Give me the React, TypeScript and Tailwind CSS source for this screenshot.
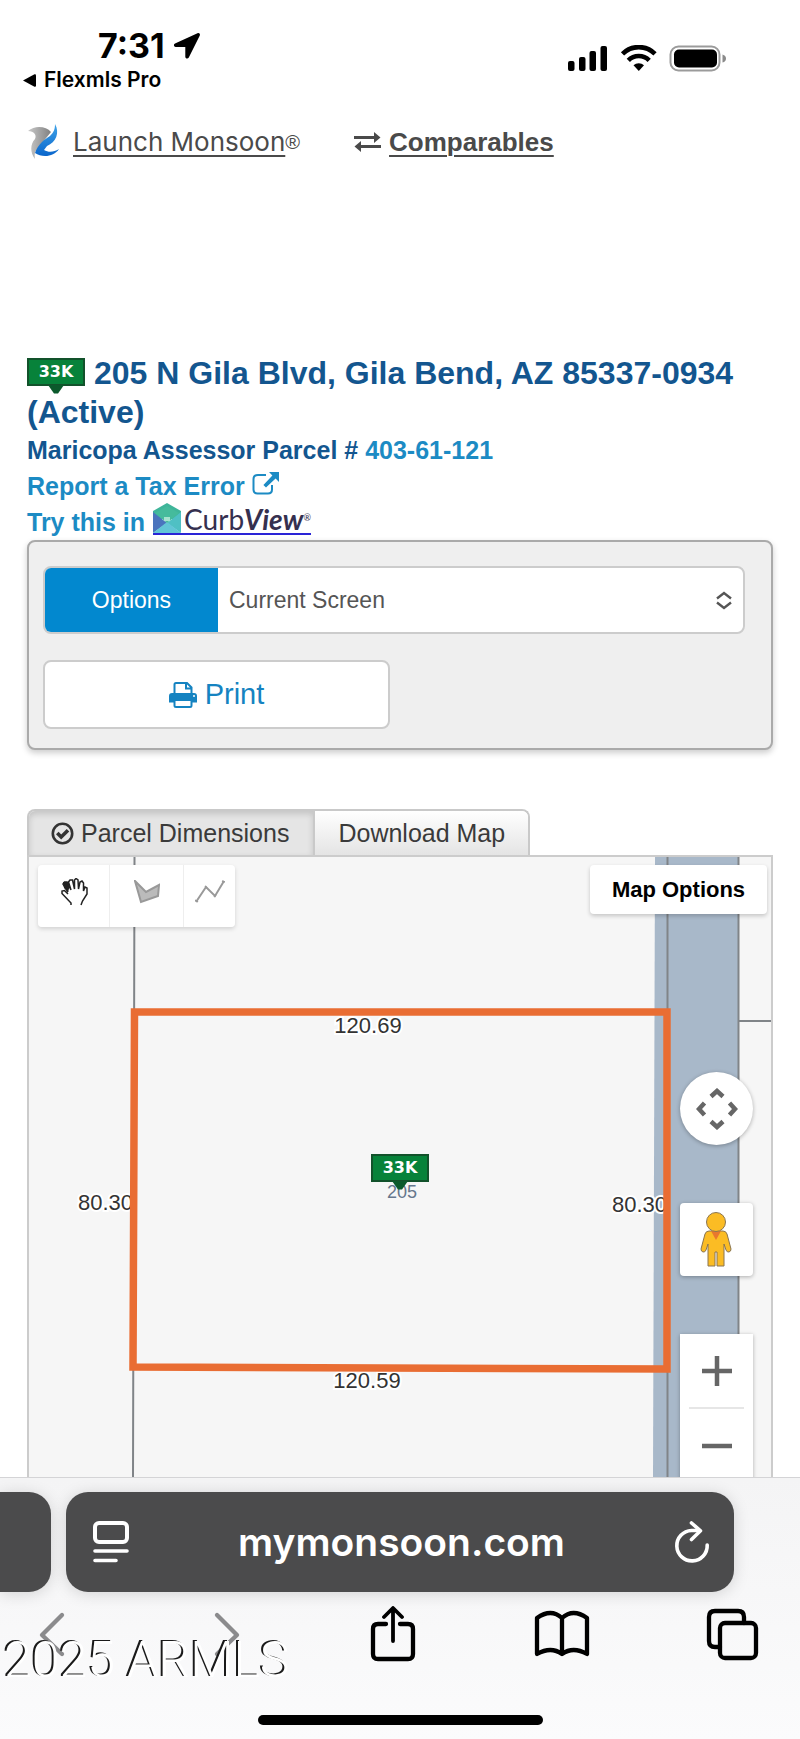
import clsx from "clsx";
import type { ReactNode } from "react";

const StatusBar = () => (
    <header className="flex items-start justify-between pt-[26px] pl-[23px] pr-[74px] text-black font-[Inter,sans-serif]">
        <div>
            <div className="flex items-center gap-2 pl-[75px] text-[34px] leading-10 font-bold">
                7:31
                <svg width="28" height="28" viewBox="0 0 28 28" aria-hidden="true">
                    <path d="M24.5 1.2 2 11.6C.3 12.4.8 15 2.7 15h9.6v9.8c0 2 2.700 2.400 3.500.700L26.800 3.600c.7-1.600-.7-3.100-2.300-2.400z" />
                </svg>
            </div>
            <a href="#flexmls" className="flex items-center gap-2 text-[21px] leading-7 font-semibold">
                <svg width="13" height="13" viewBox="0 0 13 13" aria-hidden="true">
                    <path d="M0 6.500 11.500.300Q13-.2 13 1.500v10q0 1.700-1.500 1.200z" />
                </svg>
                Flexmls Pro
            </a>
        </div>
        <svg className="mt-[19px]" width="159" height="28" viewBox="0 0 159 28" aria-label="Signal, Wi-Fi and battery">
            <rect x="1" y="16" width="6.500" height="10" rx="2" />
            <rect x="12" y="12" width="6.500" height="14" rx="2" />
            <rect x="22.500" y="6" width="6.500" height="20" rx="2" />
            <rect x="33.500" y="1" width="6.500" height="25" rx="2" />
            <g fill="none" stroke="#000" strokeWidth="4.600">
                <path d="M55.500 8.800a23 23 0 0 1 32.500 0" />
                <path d="M61.300 15.300a14.800 14.800 0 0 1 20.900 0" />
            </g>
            <path d="M66.500 20.300a7.800 7.800 0 0 1 10.500 0l-5.200 5.700z" />
            <rect x="103.500" y="1.500" width="49" height="24" rx="8" fill="none" stroke="#9b9b9b" strokeWidth="2" />
            <rect x="107" y="4.500" width="43" height="18" rx="5" />
            <path d="M155.500 9.500q3.500 1 3.500 4t-3.500 4z" fill="#8a8a8a" />
        </svg>
    </header>
);

const MonsoonLogo = () => (
    <svg width="33" height="36" viewBox="0 0 33 36" aria-hidden="true">
        <defs>
            <linearGradient id="blade" x1="0" y1="0" x2="1" y2="0">
                <stop offset="0" stopColor="#c9c9c9" />
                <stop offset="1" stopColor="#808080" />
            </linearGradient>
            <linearGradient id="swirl" x1="0" y1="0" x2="0" y2="1">
                <stop offset="0" stopColor="#3fa3e8" />
                <stop offset="1" stopColor="#0a66cc" />
            </linearGradient>
        </defs>
        <path d="M1 7C8 1 19 2 24 8L11 24C8 27 7 30 8 35 3 29 3 20 8 15 10 11 7 7 1 7z" fill="url(#blade)" />
        <path d="M28 0C33 9 29 18 20 22L17 26C22 29 27 28 32 25 27 33 15 34 8 29 11 20 18 15 23 12 27 8 28 5 28 0z" fill="url(#swirl)" />
    </svg>
);

const PriceTag = () => (
    <span className="relative inline-flex h-[28px] w-[58px] items-center justify-center border-2 border-[#12522b] bg-[#07823a] align-top font-['DejaVu_Sans',sans-serif] text-[16px] leading-6 font-bold text-white">
        33K
        <svg className="absolute top-[25px] left-[19px]" width="16" height="10" viewBox="0 0 16 10" aria-hidden="true">
            <path d="M0 0h16L10 8.500H6z" fill="#0b5a2c" />
        </svg>
    </span>
);

const CurbViewLogo = () => (
    <a href="#curbview" className="inline-flex h-[31px] items-end border-b-2 border-[#2a24d6] font-[Lato,sans-serif] text-[28px] leading-7 font-normal text-[#35304f]">
        <svg width="29" height="30" viewBox="0 0 29 30" aria-hidden="true">
            <path d="M0 8 14 0l14 8v8H0z" fill="#3fb59a" />
            <path d="M0 9v21l14-10z" fill="#4a74bd" />
            <path d="M28 9v21L14 20z" fill="#4fc0c4" />
            <path d="M0 30 14 19l14 11z" fill="#62c5d6" />
            <path d="M2 10 14 20 26 10 14 3z" fill="#45bb9c" />
            <path d="M11 14h6v4h-6z" fill="#a5e3cf" />
        </svg>
        <span className="pl-[2px]">Curb</span>
        <span className="font-bold italic">View</span>
        <span className="self-start text-[9px] leading-7">®</span>
    </a>
);

const PropertyHeading = () => (
    <section className="mt-[196px] font-bold text-[#13568f]">
        <h1 className="text-[32px] leading-[39px]">
            <span className="flex items-start gap-[9px]">
                <span className="flex pt-1">
                    <PriceTag />
                </span>
                <span>205 N Gila Blvd, Gila Bend, AZ 85337-0934</span>
            </span>
            <span className="block">(Active)</span>
        </h1>
        <div className="text-[25px] leading-9">
            <p>
                Maricopa Assessor Parcel #{" "}
                <a href="#parcel" className="text-[#1c8bc4]">403-61-121</a>
            </p>
            <p>
                <a href="#tax-error" className="text-[#1c8bc4]">
                    Report a Tax Error{" "}
                    <svg className="inline-block align-baseline" width="27" height="23" viewBox="0 0 27 23" aria-hidden="true">
                        <path d="M14 3H6Q1.500 3 1.500 7v10.500q0 4 4 4h10.500q4 0 4-4V13" fill="none" stroke="currentColor" strokeWidth="2" />
                        <path d="M17 0h10v10l-3.400-3.400-9.600 9-2.600-2.600 9-9.600z" fill="currentColor" />
                    </svg>
                </a>
            </p>
            <p className="flex items-start gap-2">
                <span className="text-[#1c8bc4]">Try this in</span>
                <CurbViewLogo />
            </p>
        </div>
    </section>
);

const OptionsPanel = () => (
    <section className="rounded-lg border-2 border-[#aaa] bg-[#efefef] pt-6 pr-[26px] pb-[19px] pl-[14px] shadow-[0_3px_6px_rgba(0,0,0,0.2)]">
        <div className="flex h-[68px] rounded-lg border-2 border-[#ccc] bg-white text-[23px]">
            <label htmlFor="print-options" className="flex w-[173px] items-center justify-center rounded-l-md bg-[#0288cf] text-white">
                Options
            </label>
            <div className="relative flex-1">
                <select id="print-options" className="h-full w-full appearance-none rounded-r-lg bg-white pl-[11px] text-[#555]">
                    <option>Current Screen</option>
                </select>
                <svg className="pointer-events-none absolute top-[23px] right-[11px]" width="16" height="19" viewBox="0 0 16 19" fill="none" stroke="#555" strokeWidth="2.400" aria-hidden="true">
                    <path d="M1 7.500 8 2l7 5.500M1 11.500 8 17l7-5.500" />
                </svg>
            </div>
        </div>
        <button type="button" className="mt-[26px] flex h-[69px] w-[347px] items-center justify-center gap-2 rounded-lg border-2 border-[#ccc] bg-white text-[29px] text-[#1583c1]">
            <svg width="28" height="26" viewBox="0 0 28 26" aria-hidden="true">
                <path d="M0 14q0-3 3-3h22q3 0 3 3v6.500h-5V17H5v3.500H0z" fill="currentColor" />
                <path d="M5.500 12V2.500q0-1.500 1.500-1.500h11l4.500 4.500V12M17 1v5.500h5.500" fill="none" stroke="currentColor" strokeWidth="2" />
                <path d="M5.500 18h17v5.500q0 1.500-1.500 1.500H7q-1.500 0-1.500-1.500z" fill="#fff" stroke="currentColor" strokeWidth="2" />
                <circle cx="25" cy="14" r="1" fill="#fff" />
            </svg>
            Print
        </button>
    </section>
);

const MapTabs = () => (
    <div role="tablist" className="mt-[59px] flex w-fit rounded-t-lg border-2 border-b-0 border-[#c9c9c9] text-[25px] leading-[44px] text-[#3a3a3a]">
        <button type="button" role="tab" aria-selected="true" className="flex items-center gap-[7px] rounded-tl-md bg-[#e5e5e5] pr-6 pl-[22px] shadow-[inset_0_3px_6px_rgba(0,0,0,0.15)]">
            <svg width="23" height="23" viewBox="0 0 23 23" fill="none" stroke="#333" aria-hidden="true">
                <circle cx="11.500" cy="11.500" r="9.700" strokeWidth="2.600" />
                <path d="m6.300 11 3.900 4 6.800-6.800" strokeWidth="3.600" />
            </svg>
            Parcel Dimensions
        </button>
        <button type="button" role="tab" aria-selected="false" className="rounded-tr-md border-l-2 border-[#c9c9c9] bg-linear-to-b from-white to-[#e4e4e4] px-[23px]">
            Download Map
        </button>
    </div>
);

const ParcelDrawing = () => (
    <svg
        className="block h-full w-full font-['Liberation_Sans',sans-serif]"
        viewBox="0 0 742 620"
        preserveAspectRatio="xMidYMid slice"
        aria-label="Parcel map"
    >
        <path d="M626 0h84v620h-86z" fill="#a8b8c9" />
        <g stroke="#808488" strokeWidth="2">
            <path d="M638.500 0v620M709.500 0v620" />
            <path d="M105.500 0 104 620M709 164h33" />
        </g>
        <g fontSize="22" fill="#333" stroke="#fff" strokeWidth="4" paintOrder="stroke">
            <text x="339" y="176" textAnchor="middle">120.69</text>
            <text x="338" y="531" textAnchor="middle">120.59</text>
            <text x="49" y="353">80.30</text>
            <text x="583" y="355">80.30</text>
        </g>
        <text x="373" y="341" textAnchor="middle" fontSize="18" fill="#66778d">205</text>
        <path d="M105.500 155H638v357l-534-2z" fill="none" stroke="#e96d33" strokeWidth="7.500" />
    </svg>
);

type MapButtonProps = {
    label: string;
    className?: string;
    children: ReactNode;
};

const MapButton = ({ label, className, children }: MapButtonProps) => (
    <button type="button" aria-label={label} className={clsx("flex items-center justify-center bg-white", className)}>
        {children}
    </button>
);

const ParcelMap = () => (
    <section className="relative h-[622px] overflow-hidden border-2 border-b-0 border-[#ccc] bg-[#f6f6f6]">
        <ParcelDrawing />

        <div className="absolute top-[297px] left-1/2 -ml-[29px] flex">
            <PriceTag />
        </div>

        <div className="absolute top-2 left-[9px] flex h-[62px] gap-px rounded-sm bg-[#eee] shadow-[0_2px_4px_rgba(0,0,0,0.15)]">
            <MapButton label="Pan" className="w-[71px] rounded-l-sm pb-2">
                <svg width="28" height="28" viewBox="0 0 28 28" fill="none" stroke="#222" strokeWidth="1.500" aria-hidden="true">
                    <path d="M11 27v-2L2 15.500v-2.500l2.500-.5L8 16M8 14 3 6l1.500-2H7l4 8L8.500 4 10 2h2.500l2 9V2l1.500-1.500L18 2l.5 9L20 4l2-1 1.500 2v8L25 9l2 1v6l-4.500 7-1.500 4" />
                    <path d="M3 4h4l2.500 5-1.500 5-4-4z" fill="#222" stroke="none" />
                </svg>
            </MapButton>
            <MapButton label="Draw a shape" className="w-[73px] pl-px pb-2">
                <svg width="26" height="24" viewBox="0 0 26 24" aria-hidden="true">
                    <path d="m1 1 11 11 13-7-1 11L7 22z" fill="#bbb" stroke="#999" strokeWidth="2" />
                </svg>
            </MapButton>
            <MapButton label="Draw a line" className="w-[51px] rounded-r-sm pb-2">
                <svg width="30" height="24" viewBox="0 0 30 24" fill="none" stroke="#999" strokeWidth="2" aria-hidden="true">
                    <path d="M1 22 11 7l9 9L29 1" />
                    <path d="m0 20 3 2M10 6l2 2M19 17l2-2M27 1l3 1" strokeWidth="1.500" />
                </svg>
            </MapButton>
        </div>

        <button type="button" className="absolute top-2 right-1 h-[49px] w-[177px] rounded-sm bg-white text-[22px] font-bold text-black shadow-[0_2px_4px_rgba(0,0,0,0.2)]">
            Map Options
        </button>

        <div className="absolute top-[215px] right-[18px] flex w-[73px] flex-col gap-[58px]">
            <MapButton label="Move the map" className="h-[73px] rounded-full shadow-[0_1px_4px_rgba(0,0,0,0.3)]">
                <svg width="42" height="42" viewBox="0 0 42 42" fill="none" stroke="#666" strokeWidth="4.500" aria-hidden="true">
                    <path d="m15 8.500 6-5.500 6 5.500M15 33.500l6 5.500 6-5.500M8.500 15 3 21l5.500 6M33.500 15l5.500 6-5.500 6" />
                </svg>
            </MapButton>
            <MapButton label="Street view" className="h-[73px] rounded-sm shadow-[0_1px_4px_rgba(0,0,0,0.3)]">
                <svg className="mr-[2px]" width="32" height="55" viewBox="0 0 32 55" fill="#fbbc24" stroke="#8a7550" aria-hidden="true">
                    <path d="M9 19h14q3 0 4 3l4 15q0 2.500-2 3t-3-2l-2-6v22h-7V40h-2v14H8V32l-2 6q-1 2.500-3 2t-2-3l4-15q1-3 4-3z" />
                    <path d="M11 19h10l-5 9z" fill="#e8772e" stroke="none" />
                    <circle cx="16" cy="10" r="9.500" />
                </svg>
            </MapButton>
            <div className="bg-white px-[9px] shadow-[0_1px_4px_rgba(0,0,0,0.3)]">
                <MapButton label="Zoom in" className="h-[75px] w-full border-b-2 border-[#e6e6e6]">
                    <svg width="30" height="30" viewBox="0 0 30 30" stroke="#666" strokeWidth="4.500" aria-hidden="true">
                        <path d="M0 15h30M15 0v30" />
                    </svg>
                </MapButton>
                <MapButton label="Zoom out" className="h-[74px] w-full">
                    <svg width="30" height="30" viewBox="0 0 30 30" stroke="#666" strokeWidth="4.500" aria-hidden="true">
                        <path d="M0 15h30" />
                    </svg>
                </MapButton>
            </div>
        </div>
    </section>
);

const AddressBar = () => (
    <div className="flex h-[100px] gap-[15px] pr-[66px]">
        <div className="w-[51px] rounded-r-[22px] bg-[#4b4b4c] shadow-[0_2px_16px_rgba(0,0,0,0.15)]" />
        <div className="flex flex-1 items-center justify-between rounded-[22px] bg-[#4b4b4c] pr-6 pl-[27px] text-white shadow-[0_2px_16px_rgba(0,0,0,0.15)]">
            <button type="button" aria-label="Page menu">
                <svg width="36" height="42" viewBox="0 0 36 42" fill="none" stroke="currentColor" strokeWidth="4" strokeLinecap="round" aria-hidden="true">
                    <rect x="2" y="2" width="32" height="19" rx="4" />
                    <path d="M2 30h32M2 39.500h21" strokeWidth="3.600" />
                </svg>
            </button>
            <button type="button" className="font-[Inter,sans-serif] text-[39px] leading-[48px] font-semibold">
                mymonsoon.com
            </button>
            <button type="button" aria-label="Reload">
                <svg width="36" height="42" viewBox="0 0 36 42" fill="none" stroke="currentColor" strokeWidth="3.600" strokeLinecap="round" strokeLinejoin="round" aria-hidden="true">
                    <path d="M25 9.500H17.500A15.200 15.200 0 1 0 33.200 24" />
                    <path d="m17.500 2 9 7.800-9 8.700" />
                </svg>
            </button>
        </div>
    </div>
);

const NavButton = ({ label, children }: { label: string; children: ReactNode }) => (
    <button type="button" aria-label={label} className="w-14">
        <svg width="56" height="56" viewBox="0 0 56 56" fill="none" stroke="currentColor" strokeWidth="4.300" strokeLinecap="round" strokeLinejoin="round" aria-hidden="true">
            {children}
        </svg>
    </button>
);

const BrowserBar = () => (
    <footer className="relative border-t border-[#d4d4d6] bg-linear-to-b from-[#f4f4f5] to-[#fbfbfc] pt-[14px] pb-[14px]">
        <AddressBar />
        <nav className="mt-[14px] flex justify-between pr-10 pl-[25px] text-black">
            <NavButton label="Back">
                <path d="M37 9 17 29l20 19" stroke="#8b8b8d" />
            </NavButton>
            <NavButton label="Forward">
                <path d="m22 9 20 20-20 19" stroke="#8b8b8d" />
            </NavButton>
            <NavButton label="Share">
                <path d="M21 18h-8q-5 0-5 5v25q0 5 5 5h30q5 0 5-5V23q0-5-5-5h-8" />
                <path d="M28 35V3m-9 8 9-9 9 9" strokeWidth="3.800" />
            </NavButton>
            <NavButton label="Bookmarks">
                <path d="M28 12q-11-10-25 0v36q14-8 25 0 11-8 25 0V12q-14-10-25 0v36" />
            </NavButton>
            <NavButton label="Tabs">
                <rect x="16" y="17" width="36" height="35" rx="5" />
                <path d="M16 41h-5q-6 0-6-6V11q0-6 6-6h23q6 0 6 6v6" />
            </NavButton>
        </nav>
        <p className="pointer-events-none absolute top-[152px] left-1 font-[Roboto,sans-serif] text-[50px] leading-[60px] font-light text-white [text-shadow:-2px_-1px_0_#1a1a1a]">
            2025 ARMLS
        </p>
        <div className="mx-auto mt-[53px] h-[10px] w-[285px] rounded-full bg-black" />
    </footer>
);

const App = () => (
    <div className="bg-white font-['Liberation_Sans',Arial,sans-serif]">
        <StatusBar />
        <main className="px-[27px]">
            <nav className="mt-8 flex h-8 items-center text-[26px] leading-8 text-[#4a4a4a]">
                <MonsoonLogo />
                <a href="#monsoon" className="ml-[13px] font-[Inter,sans-serif] underline decoration-2 underline-offset-4">Launch Monsoon</a>
                <span className="text-[20px]">®</span>
                <a href="#comparables" className="ml-[54px] flex items-center gap-2 font-bold">
                    <svg width="27" height="20" viewBox="0 0 27 20" fill="currentColor" aria-hidden="true">
                        <path d="M0 4h20V0l6.500 5.500L20 11V7H0zM27 13H7V9L.5 14.500 7 20v-4h20z" />
                    </svg>
                    <span className="underline decoration-2 underline-offset-4">Comparables</span>
                </a>
            </nav>
            <PropertyHeading />
            <OptionsPanel />
            <MapTabs />
            <ParcelMap />
        </main>
        <BrowserBar />
    </div>
);

export default App;
